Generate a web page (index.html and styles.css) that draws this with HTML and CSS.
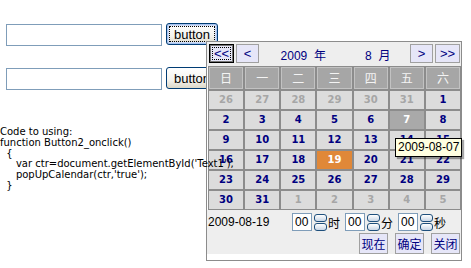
FILE: index.html
```html
<!DOCTYPE html>
<html lang="zh-cn">
<head>
    <meta charset="UTF-8">
    <title>Calendar</title>
    <link rel="stylesheet" href="styles.css">
</head>
<body>
    <div class="form">
        <div class="field">
            <input class="text" type="text">
            <button class="btn focused">button</button>
        </div>
        <div class="field">
            <input class="text" type="text">
            <button class="btn">button</button>
        </div>
    </div>

<pre class="code">Code to using:
function Button2_onclick()
  {
     var ctr=document.getElementById('Text1');
     popUpCalendar(ctr,'true');
  }</pre>

    <div class="calendar">
        <div class="cal-head">
            <button class="nav wide focused">&lt;&lt;</button>
            <button class="nav">&lt;</button>
            <div class="title">
                <span>2009&nbsp; 年</span>
                <span>8&nbsp; 月</span>
            </div>
            <button class="nav">&gt;</button>
            <button class="nav wide">&gt;&gt;</button>
        </div>

        <div class="days">
            <div class="wd">日</div><div class="wd">一</div><div class="wd">二</div><div class="wd">三</div><div class="wd">四</div><div class="wd">五</div><div class="wd">六</div>

            <div class="day other">26</div><div class="day other">27</div><div class="day other">28</div><div class="day other">29</div><div class="day other">30</div><div class="day other">31</div><div class="day">1</div>
            <div class="day">2</div><div class="day">3</div><div class="day">4</div><div class="day">5</div><div class="day">6</div><div class="day hover">7</div><div class="day">8</div>
            <div class="day">9</div><div class="day">10</div><div class="day">11</div><div class="day">12</div><div class="day">13</div><div class="day">14</div><div class="day">15</div>
            <div class="day">16</div><div class="day">17</div><div class="day">18</div><div class="day today">19</div><div class="day">20</div><div class="day">21</div><div class="day">22</div>
            <div class="day">23</div><div class="day">24</div><div class="day">25</div><div class="day">26</div><div class="day">27</div><div class="day">28</div><div class="day">29</div>
            <div class="day">30</div><div class="day">31</div><div class="day other">1</div><div class="day other">2</div><div class="day other">3</div><div class="day other">4</div><div class="day other">5</div>
        </div>

        <div class="cal-foot">
            <div class="time-row">
                <span class="date">2009-08-19</span>
                <span class="unit"><input class="num" value="00"><span class="spin"><i></i><i></i></span><span class="lbl">时</span></span>
                <span class="unit"><input class="num" value="00"><span class="spin"><i></i><i></i></span><span class="lbl">分</span></span>
                <span class="unit"><input class="num" value="00"><span class="spin"><i></i><i></i></span><span class="lbl">秒</span></span>
            </div>
            <div class="actions">
                <button class="act">现在</button>
                <button class="act">确定</button>
                <button class="act">关闭</button>
            </div>
        </div>

        <div class="tip">2009-08-07</div>
    </div>
</body>
</html>
```

FILE: styles.css
```css
body {
    margin: 0;
    font-family: "Liberation Sans", Arial, sans-serif;
    background: #fff;
}

.form {
    padding: 23px 0 0 6px;
}

.field {
    display: flex;
    align-items: flex-start;
    gap: 4px;
    height: 22px;
    margin-bottom: 22px;
}

.text {
    width: 156px;
    height: 22px;
    margin: 1px 0 0 0;
    box-sizing: border-box;
    border: 1px solid #7f9db9;
    padding: 0;
}

.btn {
    width: 52px;
    height: 22px;
    padding: 0;
    border: 1px solid #003c74;
    border-radius: 3px;
    background: linear-gradient(#ffffff, #f4f3ee 60%, #dcd8c8);
    font-family: "Liberation Sans", Arial, sans-serif;
    font-size: 13px;
    color: #000;
}

.btn.focused {
    box-shadow: inset 0 0 0 1px #a8c4f0, inset 0 0 0 2px #cfdcf5;
    outline: 1px dotted #000;
    outline-offset: -4px;
}

.code {
    position: relative;
    z-index: 2;
    margin: 38px 0 0 0;
    font-family: "DejaVu Sans", Verdana, sans-serif;
    font-size: 10px;
    line-height: 10.8px;
    color: #000;
}

.calendar {
    position: absolute;
    z-index: 1;
    left: 206px;
    top: 41px;
    width: 254px;
    height: 218px;
    border: 1px solid #8c8c8c;
    background: #fff;
}

.cal-head {
    display: flex;
    align-items: flex-start;
    height: 24px;
    padding: 2px 1px 0 2px;
    box-sizing: border-box;
    background: #eeeeee;
}

.nav {
    width: 23px;
    height: 19px;
    padding: 0;
    margin-right: 2px;
    border: 1px solid #a0a0a0;
    background: #e6e6f8;
    color: #000080;
    font-family: "Liberation Sans", Arial, sans-serif;
    font-size: 13px;
    line-height: 15px;
}

.nav.wide {
    width: 25px;
}

.nav:last-child {
    margin-right: 0;
}

.nav.focused {
    border: 1px solid #000;
    box-shadow: inset 0 0 0 1px #777;
    outline: 1px dotted #000;
    outline-offset: -4px;
}

.title {
    flex: 1;
    display: flex;
    justify-content: space-around;
    padding-top: 2px;
    color: #000080;
    font-family: "Liberation Sans", "Noto Sans CJK SC", sans-serif;
    font-size: 12px;
}

.days {
    display: grid;
    grid-template-columns: repeat(7, 1fr);
    grid-template-rows: 22px repeat(6, 18px);
    gap: 2px;
    width: 253px;
    margin-left: 1px;
    padding: 1px;
    box-sizing: border-box;
    background: #8c8c8c;
}

.wd {
    background: #a6a6a6;
    border: 1px solid #c2c2c2;
    color: #f4f4f4;
    font-family: "Noto Sans CJK SC", sans-serif;
    font-size: 12px;
    line-height: 20px;
    text-align: center;
}

.day {
    background: #dcdcdc;
    color: #000080;
    font-family: "DejaVu Sans", Verdana, sans-serif;
    font-weight: bold;
    font-size: 10px;
    line-height: 18px;
    text-align: center;
}

.day.other {
    color: #a6a6a6;
}

.day.hover {
    background: #a9a9a9;
    color: #fff;
}

.day.today {
    background: #e08838;
    color: #fff;
}

.cal-foot {
    height: 44px;
    padding: 3px 0 0 1px;
    box-sizing: border-box;
    background: #eeeeee;
}

.time-row {
    display: flex;
    align-items: center;
    height: 18px;
    font-size: 12px;
}

.date {
    width: 84px;
    color: #000;
}

.unit {
    display: flex;
    align-items: center;
}

.num {
    width: 20px;
    height: 18px;
    box-sizing: border-box;
    border: 1px solid #7f9db9;
    padding: 0 0 0 2px;
    margin-right: 2px;
    font-family: "Liberation Sans", Arial, sans-serif;
    font-size: 12px;
}

.spin {
    display: flex;
    flex-direction: column;
    gap: 1px;
    width: 13px;
    margin-right: 1px;
}

.spin i {
    display: block;
    height: 8px;
    box-sizing: border-box;
    border: 1px solid #1e4f7c;
    border-radius: 3px;
    background: linear-gradient(#ffffff, #c9d6e6);
}

.lbl {
    width: 13px;
    margin-right: 4px;
    font-family: "Noto Sans CJK SC", sans-serif;
    font-size: 12px;
    color: #000;
}

.actions {
    display: flex;
    justify-content: flex-end;
    gap: 7px;
    margin-top: 2px;
    padding-right: 1px;
}

.act {
    width: 29px;
    height: 21px;
    padding: 0;
    border: 1px solid #a0a0a0;
    background: #e6e6f8;
    color: #000080;
    font-family: "Noto Sans CJK SC", sans-serif;
    font-size: 12px;
}

.tip {
    position: absolute;
    left: 188px;
    top: 96px;
    padding: 0 2px;
    height: 17px;
    white-space: nowrap;
    border: 1px solid #000;
    background: #ffffe1;
    box-shadow: 2px 2px 1px rgba(0, 0, 0, 0.35);
    color: #000;
    font-size: 12px;
    line-height: 17px;
}
```
